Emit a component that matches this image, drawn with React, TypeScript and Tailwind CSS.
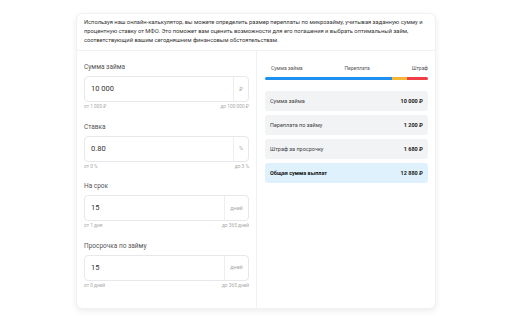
import React from "react";

interface Field {
  label: string;
  value: string;
  suffix: string;
  min: string;
  max: string;
  wide?: boolean;
}

const fields: Field[] = [
  { label: "Сумма займа", value: "10 000", suffix: "₽", min: "от 1 000 ₽", max: "до 100 000 ₽" },
  { label: "Ставка", value: "0.80", suffix: "%", min: "от 0 %", max: "до 3 %" },
  { label: "На срок", value: "15", suffix: "дней", min: "от 1 дня", max: "до 365 дней", wide: true },
  { label: "Просрочка по займу", value: "15", suffix: "дней", min: "от 0 дней", max: "до 365 дней", wide: true },
];

const amount = 10000;
const overpay = 1200;
const penalty = 1680;
const total = amount + overpay + penalty;

function FieldBlock({ f }: { f: Field }) {
  return (
    <div className="mb-[13.5px] last:mb-0">
      <p className="text-[6.5px] leading-[7px] text-[#555]">{f.label}</p>
      <div className="mt-[5px] flex h-[26px] items-stretch rounded-[4px] border border-[#e6e8eb] bg-white">
        <div className="flex flex-1 items-center pl-[6px] text-[7.5px] text-[#333]">{f.value}</div>
        <div
          className={
            f.wide
              ? "flex w-[24px] items-center justify-center border-l border-[#eceef0] text-[5.5px] text-[#aaa]"
              : "flex w-[15px] items-center justify-center border-l border-[#eceef0] text-[5.5px] text-[#aaa]"
          }
        >
          {f.suffix}
        </div>
      </div>
      <div className="mt-[2px] flex justify-between text-[4.8px] leading-[6px] text-[#aaa]">
        <span>{f.min}</span>
        <span>{f.max}</span>
      </div>
    </div>
  );
}

export default function App() {
  const rows = [
    { label: "Сумма займа", value: "10 000 ₽" },
    { label: "Переплата по займу", value: "1 200 ₽" },
    { label: "Штраф за просрочку", value: "1 680 ₽" },
  ];

  return (
    <div className="min-h-[320px] bg-white pt-[13px]" style={{ fontFamily: "Roboto, 'Noto Sans', sans-serif" }}>
      <div className="mx-auto w-[360px] rounded-[6px] border border-[#f0f1f3] bg-white shadow-[0_2px_6px_rgba(0,0,0,0.08)]">
        {/* Intro */}
        <div className="px-[7px] pt-[4px] pb-[5px] text-[5.75px] leading-[9px] whitespace-nowrap text-[#333]">
          Используя наш онлайн-калькулятор, вы можете определить размер переплаты по микрозайму, учитывая заданную сумму и
          <br />
          процентную ставку от МФО. Это поможет вам оценить возможности для его погашения и выбрать оптимальный займ,
          <br />
          соответствующий вашим сегодняшним финансовым обстоятельствам.
        </div>

        <div className="grid grid-cols-2 border-t border-[#f0f1f3]">
          {/* Inputs */}
          <div className="px-[7px] pt-[13px] pb-[19px]">
            {fields.map((f) => (
              <FieldBlock key={f.label} f={f} />
            ))}
          </div>

          {/* Results */}
          <div className="border-l border-[#f0f1f3] pl-[8px] pr-[7px] pt-[14px]">
            <div className="flex justify-between pl-[6px] text-[5px] leading-[6px] text-[#555]">
              <span>Сумма займа</span>
              <span>Переплата</span>
              <span>Штраф</span>
            </div>
            <div className="mt-[6px] flex h-[3px] overflow-hidden rounded-full">
              <div className="h-full bg-[#1e90f0]" style={{ width: `${(amount / total) * 100}%` }} />
              <div className="h-full bg-[#f7b733]" style={{ width: `${(overpay / total) * 100}%` }} />
              <div className="h-full bg-[#f03e45]" style={{ width: `${(penalty / total) * 100}%` }} />
            </div>
            <div className="mt-[11px] flex flex-col gap-[4px]">
              {rows.map((r) => (
                <div
                  key={r.label}
                  className="flex h-[20px] items-center justify-between rounded-[3px] bg-[#f2f3f5] px-[5px] text-[5.5px]"
                >
                  <span className="text-[#444]">{r.label}</span>
                  <span className="font-bold text-[#222]">{r.value}</span>
                </div>
              ))}
              <div className="flex h-[20px] items-center justify-between rounded-[3px] bg-[#dff1fd] px-[5px] text-[5.5px]">
                <span className="font-bold text-[#111]">Общая сумма выплат</span>
                <span className="font-bold text-[#222]">12 880 ₽</span>
              </div>
            </div>
          </div>
        </div>
      </div>
    </div>
  );
}
